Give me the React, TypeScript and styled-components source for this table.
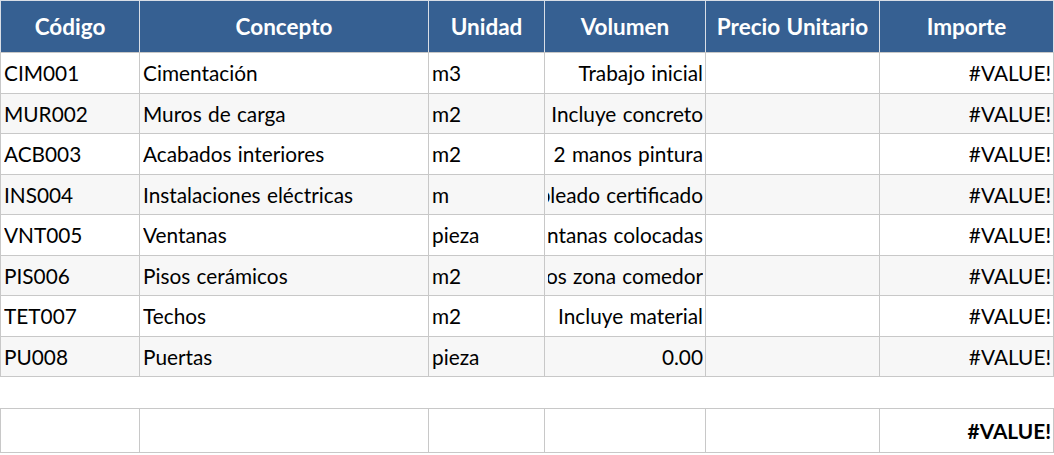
import React from "react";
import styled, { createGlobalStyle } from "styled-components";

interface Partida {
  codigo: string;
  concepto: string;
  unidad: string;
  volumen: string;
  precio: string;
  importe: string;
}

const partidas: Partida[] = [
  { codigo: "CIM001", concepto: "Cimentación", unidad: "m3", volumen: "Trabajo inicial", precio: "", importe: "#VALUE!" },
  { codigo: "MUR002", concepto: "Muros de carga", unidad: "m2", volumen: "Incluye concreto", precio: "", importe: "#VALUE!" },
  { codigo: "ACB003", concepto: "Acabados interiores", unidad: "m2", volumen: "2 manos pintura", precio: "", importe: "#VALUE!" },
  { codigo: "INS004", concepto: "Instalaciones eléctricas", unidad: "m", volumen: "Cableado certificado", precio: "", importe: "#VALUE!" },
  { codigo: "VNT005", concepto: "Ventanas", unidad: "pieza", volumen: "Ventanas colocadas", precio: "", importe: "#VALUE!" },
  { codigo: "PIS006", concepto: "Pisos cerámicos", unidad: "m2", volumen: "Pisos zona comedor", precio: "", importe: "#VALUE!" },
  { codigo: "TET007", concepto: "Techos", unidad: "m2", volumen: "Incluye material", precio: "", importe: "#VALUE!" },
  { codigo: "PU008", concepto: "Puertas", unidad: "pieza", volumen: "0.00", precio: "", importe: "#VALUE!" },
];

const colWidths = [139, 289, 116, 161, 174, 174];

const GlobalStyle = createGlobalStyle`
  body {
    margin: 0;
    background: #ffffff;
    font-family: Lato, "Liberation Sans", sans-serif;
    color: #000;
  }
`;

const Sheet = styled.div`
  width: 1054px;
`;

const Table = styled.table<{ $gap?: number }>`
  width: 1053px;
  table-layout: fixed;
  border-collapse: collapse;
  margin-top: ${(p) => p.$gap ?? 0}px;
`;

const HeadCell = styled.th`
  height: 51px;
  padding: 0 3px;
  background: #366092;
  color: #ffffff;
  font-size: 22.5px;
  font-weight: 700;
  word-spacing: 1px;
  text-align: center;
  border: 1px solid #d9dee6;
  border-bottom-color: #c8c8c8;
  white-space: nowrap;
  overflow: hidden;
`;

const Row = styled.tr<{ $striped?: boolean; $tall?: boolean }>`
  height: ${(p) => (p.$tall ? 44 : 40.5)}px;
  background: ${(p) => (p.$striped ? "#f7f7f7" : "#ffffff")};
`;

const Cell = styled.td<{ $bold?: boolean }>`
  padding: 0 2px 0 3px;
  font-size: 20.8px;
  word-spacing: 1px;
  font-weight: ${(p) => (p.$bold ? 700 : 400)};
  border: 1px solid #c8c8c8;
  overflow: hidden;
  white-space: nowrap;
`;

// right-aligned content clipped from the left like a spreadsheet cell
const Fit = styled.div<{ $align?: "left" | "right" }>`
  display: flex;
  justify-content: ${(p) => (p.$align === "right" ? "flex-end" : "flex-start")};
  overflow: hidden;

  span {
    white-space: nowrap;
    flex-shrink: 0;
  }
`;

const headers = ["Código", "Concepto", "Unidad", "Volumen", "Precio Unitario", "Importe"];

const Cols = () => (
  <colgroup>
    {colWidths.map((w, i) => (
      <col key={i} style={{ width: w }} />
    ))}
  </colgroup>
);

export default function App() {
  return (
    <Sheet>
      <GlobalStyle />
      <Table>
        <Cols />
        <thead>
          <tr>
            {headers.map((h) => (
              <HeadCell key={h}>{h}</HeadCell>
            ))}
          </tr>
        </thead>
        <tbody>
          {partidas.map((p, i) => (
            <Row key={p.codigo} $striped={i % 2 === 1}>
              <Cell>
                <Fit><span>{p.codigo}</span></Fit>
              </Cell>
              <Cell>
                <Fit><span>{p.concepto}</span></Fit>
              </Cell>
              <Cell>
                <Fit><span>{p.unidad}</span></Fit>
              </Cell>
              <Cell>
                <Fit $align="right"><span>{p.volumen}</span></Fit>
              </Cell>
              <Cell>
                <Fit $align="right"><span>{p.precio}</span></Fit>
              </Cell>
              <Cell>
                <Fit $align="right"><span>{p.importe}</span></Fit>
              </Cell>
            </Row>
          ))}
        </tbody>
      </Table>
      <Table $gap={31}>
        <Cols />
        <tbody>
          <Row $tall>
            <Cell />
            <Cell />
            <Cell />
            <Cell />
            <Cell />
            <Cell $bold>
              <Fit $align="right"><span>#VALUE!</span></Fit>
            </Cell>
          </Row>
        </tbody>
      </Table>
    </Sheet>
  );
}
